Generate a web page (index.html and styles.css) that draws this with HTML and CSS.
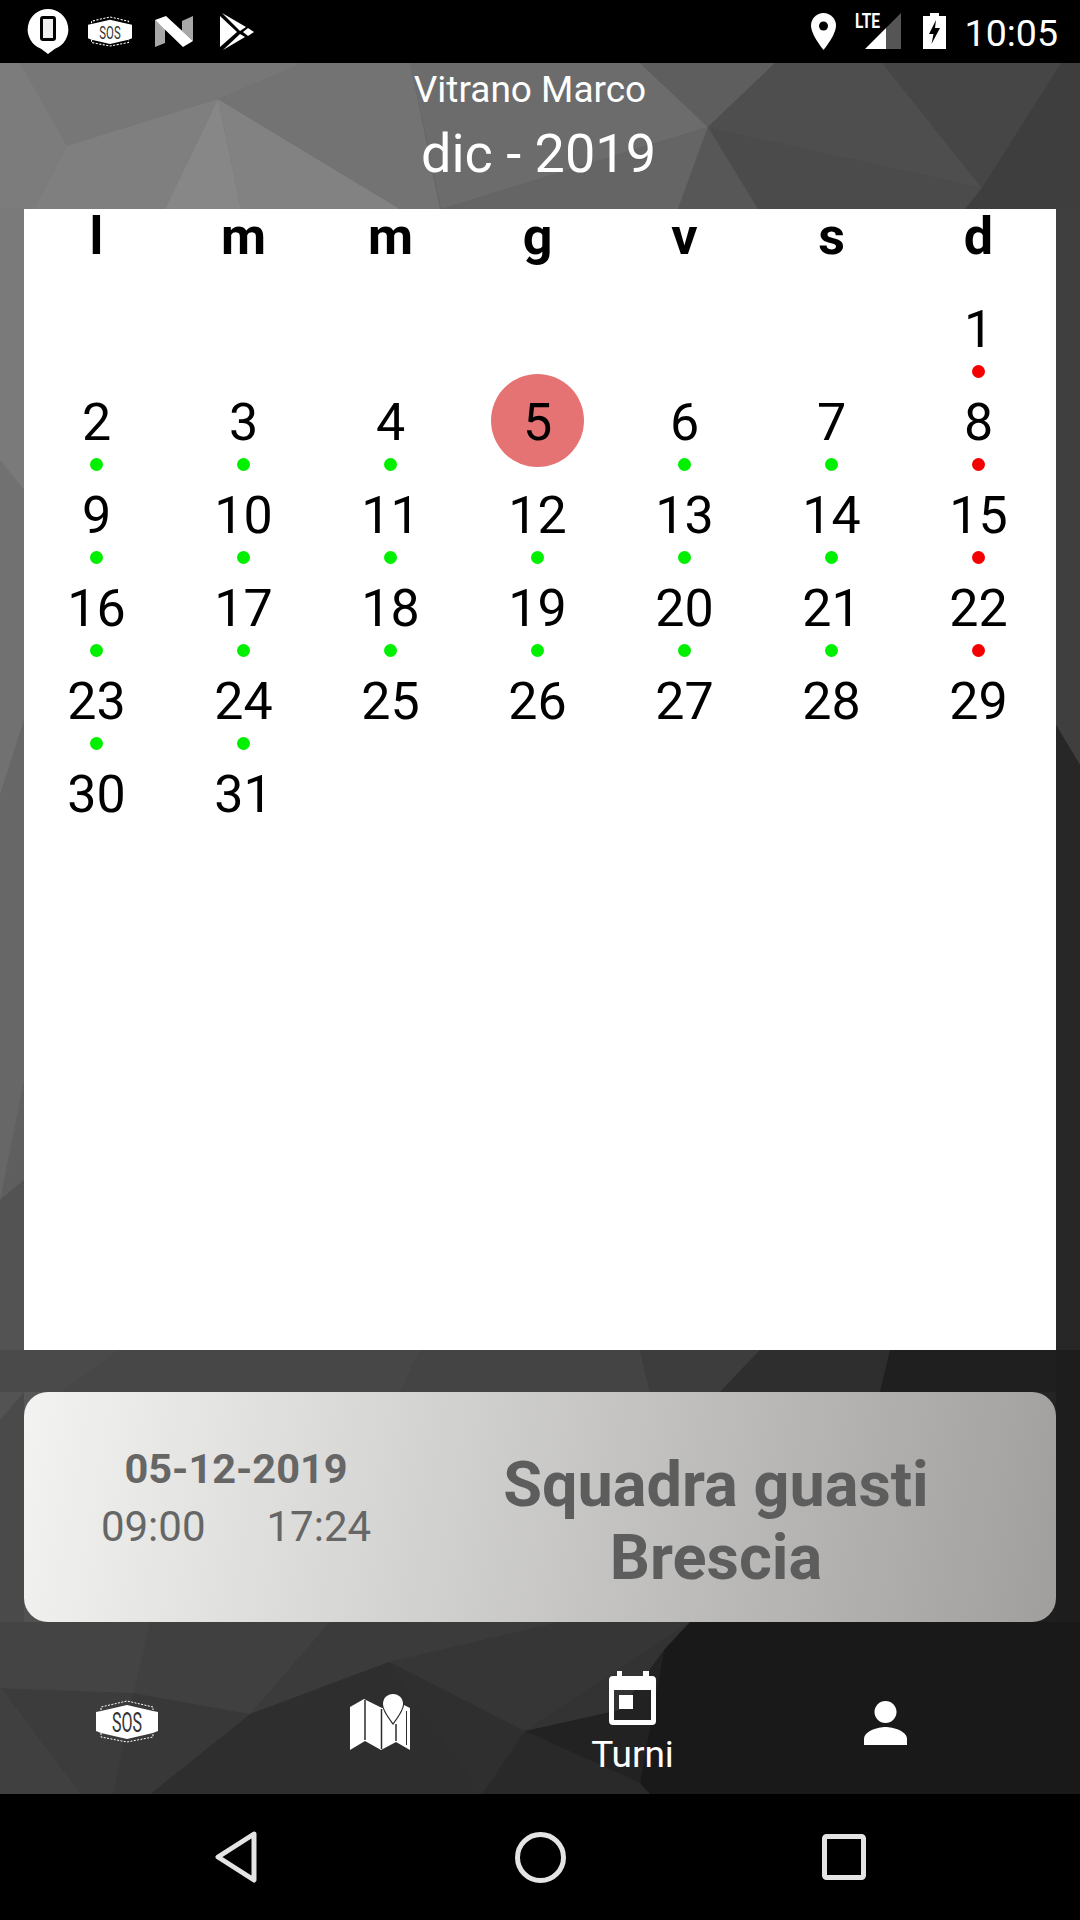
FILE: index.html
```html
<!DOCTYPE html>
<html lang="it">
<head>
<meta charset="utf-8">
<title>Turni</title>
<link rel="stylesheet" href="styles.css">
</head>
<body>
<div class="screen">
  <svg class="backdrop" viewBox="0 0 1080 1920" width="1080" height="1920" aria-hidden="true">
    <defs>
      <linearGradient id="base" x1="0" y1="0" x2="1" y2="1">
        <stop offset="0" stop-color="#808080"/><stop offset="1" stop-color="#141414"/>
      </linearGradient>
    </defs>
    <rect width="1080" height="1920" fill="url(#base)"/>
    <!-- top band -->
    <polygon fill="#7c7c7c" points="0,63 20,63 67,146 34,209 0,209"/>
    <polygon fill="#777777" points="20,63 303,63 218,99 67,146"/>
    <polygon fill="#7f7f7f" points="67,146 218,99 165,209 34,209"/>
    <polygon fill="#878787" points="218,99 241,209 165,209"/>
    <polygon fill="#828282" points="218,99 400,209 241,209"/>
    <polygon fill="#737373" points="303,63 410,63 440,209 400,209 218,99"/>
    <polygon fill="#6c6c6c" points="410,63 640,63 708,127 441,209 425,130"/>
    <polygon fill="#5e5e5e" points="640,63 775,63 708,127"/>
    <polygon fill="#656565" points="708,127 441,209 678,209"/>
    <polygon fill="#575757" points="708,127 678,209 758,209"/>
    <polygon fill="#4e4e4e" points="775,63 882,63 982,188 708,127"/>
    <polygon fill="#4b4b4b" points="708,127 982,188 965,209 758,209"/>
    <polygon fill="#464646" points="882,63 1061,63 982,188"/>
    <polygon fill="#3e3e3e" points="1061,63 1080,63 1080,209 965,209 982,188"/>
    <!-- left strip -->
    <polygon fill="#7a7a7a" points="0,209 24,209 24,490 0,460"/>
    <polygon fill="#717171" points="0,460 24,490 24,720 0,795"/>
    <polygon fill="#676767" points="0,795 24,720 24,1080 0,1200"/>
    <polygon fill="#535353" points="0,1200 24,1180 24,1392 0,1420"/>
    <polygon fill="#4a4a4a" points="0,1420 24,1392 24,1622 0,1622"/>
    <!-- right strip -->
    <polygon fill="#3f3f3f" points="1056,209 1080,209 1080,765 1056,725"/>
    <polygon fill="#272727" points="1056,725 1080,765 1080,1350 1056,1350"/>
    <polygon fill="#1d1d1d" points="1056,1350 1080,1350 1080,1622 1056,1622"/>
    <!-- middle band -->
    <polygon fill="#4a4a4a" points="0,1350 118,1350 60,1392 0,1392"/>
    <polygon fill="#474747" points="118,1350 420,1350 400,1392 60,1392"/>
    <polygon fill="#444444" points="420,1350 640,1350 650,1392 400,1392"/>
    <polygon fill="#3d3d3d" points="640,1350 760,1350 720,1392 650,1392"/>
    <polygon fill="#2e2e2e" points="760,1350 890,1350 880,1392 720,1392"/>
    <polygon fill="#1f1f1f" points="890,1350 1056,1350 1056,1392 880,1392"/>
    <!-- bottom band -->
    <polygon fill="#444444" points="0,1622 150,1622 133,1693 0,1688"/>
    <polygon fill="#404040" points="150,1622 330,1622 250,1714 133,1693"/>
    <polygon fill="#3b3b3b" points="330,1622 560,1622 389,1662 250,1714"/>
    <polygon fill="#363636" points="560,1622 690,1622 525,1731 389,1662"/>
    <polygon fill="#3c3c3c" points="0,1688 133,1693 113,1794 80,1794"/>
    <polygon fill="#404040" points="0,1688 80,1794 0,1794"/>
    <polygon fill="#383838" points="133,1693 250,1714 150,1794 113,1794"/>
    <polygon fill="#2e2e2e" points="250,1714 389,1662 482,1794 150,1794"/>
    <polygon fill="#2f2f2f" points="389,1662 525,1731 482,1794"/>
    <polygon fill="#292929" points="525,1731 640,1783 650,1794 482,1794"/>
    <polygon fill="#333333" points="525,1731 690,1622 664,1650 620,1710"/>
    <polygon fill="#222222" points="525,1731 620,1710 664,1650 640,1783"/>
    <polygon fill="#191919" points="690,1622 1080,1622 1080,1794 650,1794 640,1783 664,1650"/>
  </svg>

  <header class="statusbar">
    <div class="status-left">
      <svg class="ic-phone" width="42" height="46" viewBox="0 0 42 46">
        <path d="M21 0a20.5 20.5 0 0 1 7 39.7L21 45l-7-5.3A20.5 20.5 0 0 1 21 0z" fill="#fff"/>
        <rect x="13" y="7" width="16" height="25" rx="3" fill="#000"/>
        <rect x="16" y="10" width="10" height="19" fill="#eee"/>
      </svg>
      <svg class="ic-sos" width="44" height="31" viewBox="0 0 62 43">
        <path d="M0 12 5 11 31 5 57 11 62 12V31L57 33 31 39 5 33 0 31Z" fill="#fff"/>
        <path d="M5 10V7L31 1 57 7V10M5 33V37L31 42 57 37V33" fill="none" stroke="#fff" stroke-width="1.500" stroke-dasharray="3 2"/>
        <text x="31" y="32" text-anchor="middle" class="sos-text" textLength="30" lengthAdjust="spacingAndGlyphs">SOS</text>
      </svg>
      <svg class="ic-n" width="38" height="31" viewBox="0 0 38 31">
        <polygon points="0,4 10,13 10,27 0,31" fill="#a8a8a8"/>
        <polygon points="27,5 38,0 38,25 27,15" fill="#a8a8a8"/>
        <polygon points="0,4 11,0 38,25 28,31" fill="#fff"/>
      </svg>
      <svg class="ic-play" width="34" height="37" viewBox="0 0 34 37">
        <polygon points="0,3 17,19 0,34" fill="#fff"/>
        <polygon points="2,0 26,14 20,18" fill="#fff"/>
        <polygon points="28,15 34,19 28,23 23,19" fill="#fff"/>
        <polygon points="3,37 25,24 20,21" fill="#fff"/>
      </svg>
    </div>
    <div class="status-right">
      <svg class="ic-loc" width="25" height="37" viewBox="0 0 25 37">
        <path d="M12.5 0C5.6 0 0 5.6 0 12.5 0 22 12.5 37 12.5 37S25 22 25 12.5C25 5.6 19.4 0 12.5 0z" fill="#fff"/>
        <circle cx="12.5" cy="13" r="4.5" fill="#000"/>
      </svg>
      <svg class="ic-signal" width="46" height="37" viewBox="0 0 46 37">
        <polygon points="31,15 46,0 46,36 31,36" fill="#555"/>
        <polygon points="31,15 31,36 10,36" fill="#fff"/>
        <text x="0" y="15" class="lte-text" textLength="25" lengthAdjust="spacingAndGlyphs">LTE</text>
      </svg>
      <svg class="ic-batt" width="23" height="36" viewBox="0 0 23 36">
        <path d="M7 0h9v3h7v33H0V3h7z" fill="#fff"/>
        <polygon points="13,7 6,21 10.5,21 8.5,31 17,15 12,15" fill="#000"/>
      </svg>
      <span class="clock">10:05</span>
    </div>
  </header>

  <section class="heading">
    <div class="heading-name">Vitrano Marco</div>
    <div class="heading-month">dic - 2019</div>
  </section>

  <main class="calendar">
    <div class="week">
      <div>l</div><div>m</div><div>m</div><div>g</div><div>v</div><div>s</div><div>d</div>
    </div>
    <div class="days">
      <div class="day"></div><div class="day"></div><div class="day"></div><div class="day"></div><div class="day"></div><div class="day"></div>
      <div class="day"><span class="num">1</span><i class="dot red"></i></div>
      <div class="day"><span class="num">2</span><i class="dot green"></i></div>
      <div class="day"><span class="num">3</span><i class="dot green"></i></div>
      <div class="day"><span class="num">4</span><i class="dot green"></i></div>
      <div class="day today"><span class="num">5</span></div>
      <div class="day"><span class="num">6</span><i class="dot green"></i></div>
      <div class="day"><span class="num">7</span><i class="dot green"></i></div>
      <div class="day"><span class="num">8</span><i class="dot red"></i></div>
      <div class="day"><span class="num">9</span><i class="dot green"></i></div>
      <div class="day"><span class="num">10</span><i class="dot green"></i></div>
      <div class="day"><span class="num">11</span><i class="dot green"></i></div>
      <div class="day"><span class="num">12</span><i class="dot green"></i></div>
      <div class="day"><span class="num">13</span><i class="dot green"></i></div>
      <div class="day"><span class="num">14</span><i class="dot green"></i></div>
      <div class="day"><span class="num">15</span><i class="dot red"></i></div>
      <div class="day"><span class="num">16</span><i class="dot green"></i></div>
      <div class="day"><span class="num">17</span><i class="dot green"></i></div>
      <div class="day"><span class="num">18</span><i class="dot green"></i></div>
      <div class="day"><span class="num">19</span><i class="dot green"></i></div>
      <div class="day"><span class="num">20</span><i class="dot green"></i></div>
      <div class="day"><span class="num">21</span><i class="dot green"></i></div>
      <div class="day"><span class="num">22</span><i class="dot red"></i></div>
      <div class="day"><span class="num">23</span><i class="dot green"></i></div>
      <div class="day"><span class="num">24</span><i class="dot green"></i></div>
      <div class="day"><span class="num">25</span></div>
      <div class="day"><span class="num">26</span></div>
      <div class="day"><span class="num">27</span></div>
      <div class="day"><span class="num">28</span></div>
      <div class="day"><span class="num">29</span></div>
      <div class="day"><span class="num">30</span></div>
      <div class="day"><span class="num">31</span></div>
    </div>
  </main>

  <section class="shift">
    <div class="shift-when">
      <div class="shift-date">05-12-2019</div>
      <div class="shift-times"><span>09:00</span><span>17:24</span></div>
    </div>
    <div class="shift-team">Squadra guasti<br>Brescia</div>
  </section>

  <nav class="tabs">
    <div class="tab tab-sos">
      <svg width="62" height="43" viewBox="0 0 62 43">
        <path d="M0 12 5 11 31 5 57 11 62 12V31L57 33 31 39 5 33 0 31Z" fill="#fff"/>
        <path d="M5 10V7L31 1 57 7V10M5 33V37L31 42 57 37V33" fill="none" stroke="#fff" stroke-width="1" stroke-dasharray="2 1.400"/>
        <text x="31" y="32" text-anchor="middle" class="sos-text" textLength="30" lengthAdjust="spacingAndGlyphs">SOS</text>
      </svg>
    </div>
    <div class="tab tab-map">
      <svg width="60" height="57" viewBox="0 0 60 57">
        <path d="M0 13 14 5 32 14 48 8 60 14V56L46 48 31 56 15 47 0 56Z" fill="#fff"/>
        <path d="M15 6V46M31.500 15V55M46 30V47" fill="none" stroke="#2c2c2c" stroke-width="1.500"/>
        <path d="M56.500 17V51" fill="none" stroke="#2c2c2c" stroke-width="1"/>
        <path d="M43 0c5.800 0 10 4.300 10 9.700 0 4.700-4.500 11.800-10 19.300-5.500-7.500-10-14.600-10-19.300C33 4.300 37.200 0 43 0z" fill="#fff" stroke="#2c2c2c" stroke-width="2.500" paint-order="stroke"/>
      </svg>
    </div>
    <div class="tab tab-cal">
      <svg width="47" height="54" viewBox="0 0 47 54">
        <path fill-rule="evenodd" fill="#fff" d="M8 0h5v5h21V0h6v5h3a4 4 0 0 1 4 4v41a4 4 0 0 1-4 4H4a4 4 0 0 1-4-4V9a4 4 0 0 1 4-4h4zM5 19v30h37V19zM10 24h14v14H10z"/>
      </svg>
      <span class="tab-label">Turni</span>
    </div>
    <div class="tab tab-user">
      <svg width="43" height="44" viewBox="0 0 43 44">
        <circle cx="21.500" cy="11" r="11" fill="#fff"/>
        <path d="M0 44v-6c0-8 14-12 21.500-12S43 30 43 38v6z" fill="#fff"/>
      </svg>
    </div>
  </nav>

  <footer class="navbar">
    <svg width="42" height="52" viewBox="0 0 42 52">
      <path d="M39 3 3 26 39 49Z" fill="none" stroke="#e4e4e4" stroke-width="5" stroke-linejoin="round"/>
    </svg>
    <svg width="51" height="51" viewBox="0 0 51 51">
      <circle cx="25.500" cy="25.500" r="23" fill="none" stroke="#e4e4e4" stroke-width="5"/>
    </svg>
    <svg width="44" height="46" viewBox="0 0 44 46">
      <rect x="2.500" y="2.500" width="39" height="41" rx="2" fill="none" stroke="#e4e4e4" stroke-width="5"/>
    </svg>
  </footer>
</div>
</body>
</html>
```

FILE: styles.css
```css
* { box-sizing: border-box; }
html, body { margin: 0; padding: 0; background: #000; }
body { font-family: Roboto, "Noto Sans", sans-serif; }
svg { overflow: visible; }

.screen {
  position: relative;
  width: 1080px;
  height: 1920px;
  overflow: hidden;
  display: flex;
  flex-direction: column;
}
.backdrop { position: absolute; left: 0; top: 0; }
.screen > header, .screen > section, .screen > main, .screen > nav, .screen > footer { position: relative; }

.statusbar {
  height: 63px;
  flex: none;
  background: #000;
  display: flex;
  justify-content: space-between;
  padding: 0 22px 0 27px;
}
.status-left, .status-right { display: flex; align-items: flex-start; }
.ic-phone { margin-top: 9px; }
.ic-sos { margin: 16px 0 0 19px; }
.ic-n { margin: 16px 0 0 23px; }
.ic-play { margin: 13px 0 0 27px; }
.ic-loc { margin-top: 13px; }
.ic-signal { margin: 13px 0 0 19px; }
.ic-batt { margin: 13px 0 0 22px; }
.clock { margin: 11px 0 0 19px; font-size: 37.5px; line-height: 44px; color: #fff; }
.lte-text { font: 700 20px Roboto, sans-serif; fill: #fff; }
.sos-text { font: 400 27px Roboto, sans-serif; fill: #333; }

.heading { height: 146px; flex: none; color: #fff; text-align: center; padding: 4px 3px 0 0; }
.heading-name { font-size: 37px; line-height: 46px; padding-right: 17px; }
.heading-month { font-size: 54px; line-height: 62px; margin-top: 10px; }

.calendar {
  height: 1141px;
  flex: none;
  margin: 0 24px;
  background: #fff;
  color: #000;
}
.week, .days { display: grid; grid-template-columns: repeat(7, 147px); margin-left: -1px; }
.week { height: 72px; font-size: 52px; font-weight: 700; line-height: 56px; text-align: center; }
.day {
  position: relative;
  height: 93px;
  display: flex;
  justify-content: center;
  font-size: 52px;
  line-height: 98px;
}
.today::before {
  content: "";
  position: absolute;
  left: 27px;
  top: 0;
  width: 93px;
  height: 93px;
  border-radius: 50%;
  background: #e57373;
}
.num { position: relative; }
.dot {
  position: absolute;
  left: 67px;
  top: 84px;
  width: 13px;
  height: 13px;
  border-radius: 50%;
}
.green { background: #00f000; }
.red { background: #f40000; }

.shift {
  height: 230px;
  flex: none;
  margin: 42px 24px 0;
  border-radius: 24px;
  background: linear-gradient(100deg, #f3f3f1 0%, #a09f9d 100%);
  display: grid;
  grid-template-columns: 424px 536px;
}
.shift-when { padding-top: 51px; text-align: center; color: #666; }
.shift-date { font-size: 41.5px; font-weight: 700; line-height: 52px; }
.shift-times { display: flex; justify-content: center; gap: 61px; font-size: 42px; line-height: 52px; margin-top: 6px; }
.shift-team { padding-top: 56px; text-align: center; font-size: 63px; line-height: 73px; font-weight: 700; color: #5d5d5d; }

.tabs {
  height: 172px;
  flex: none;
  display: grid;
  grid-template-columns: repeat(4, 253px);
}
.tab { display: flex; flex-direction: column; align-items: center; }
.tab-sos { padding-top: 78px; }
.tab-map { padding-top: 72px; }
.tab-cal { padding-top: 49px; }
.tab-user { padding-top: 79px; }
.tab-label { font-size: 37px; line-height: 42px; color: #fff; margin-top: 9px; }

.navbar {
  height: 126px;
  flex: none;
  background: #000;
  display: grid;
  grid-template-columns: repeat(3, 304px);
  justify-content: center;
  justify-items: center;
  align-items: center;
}
```
